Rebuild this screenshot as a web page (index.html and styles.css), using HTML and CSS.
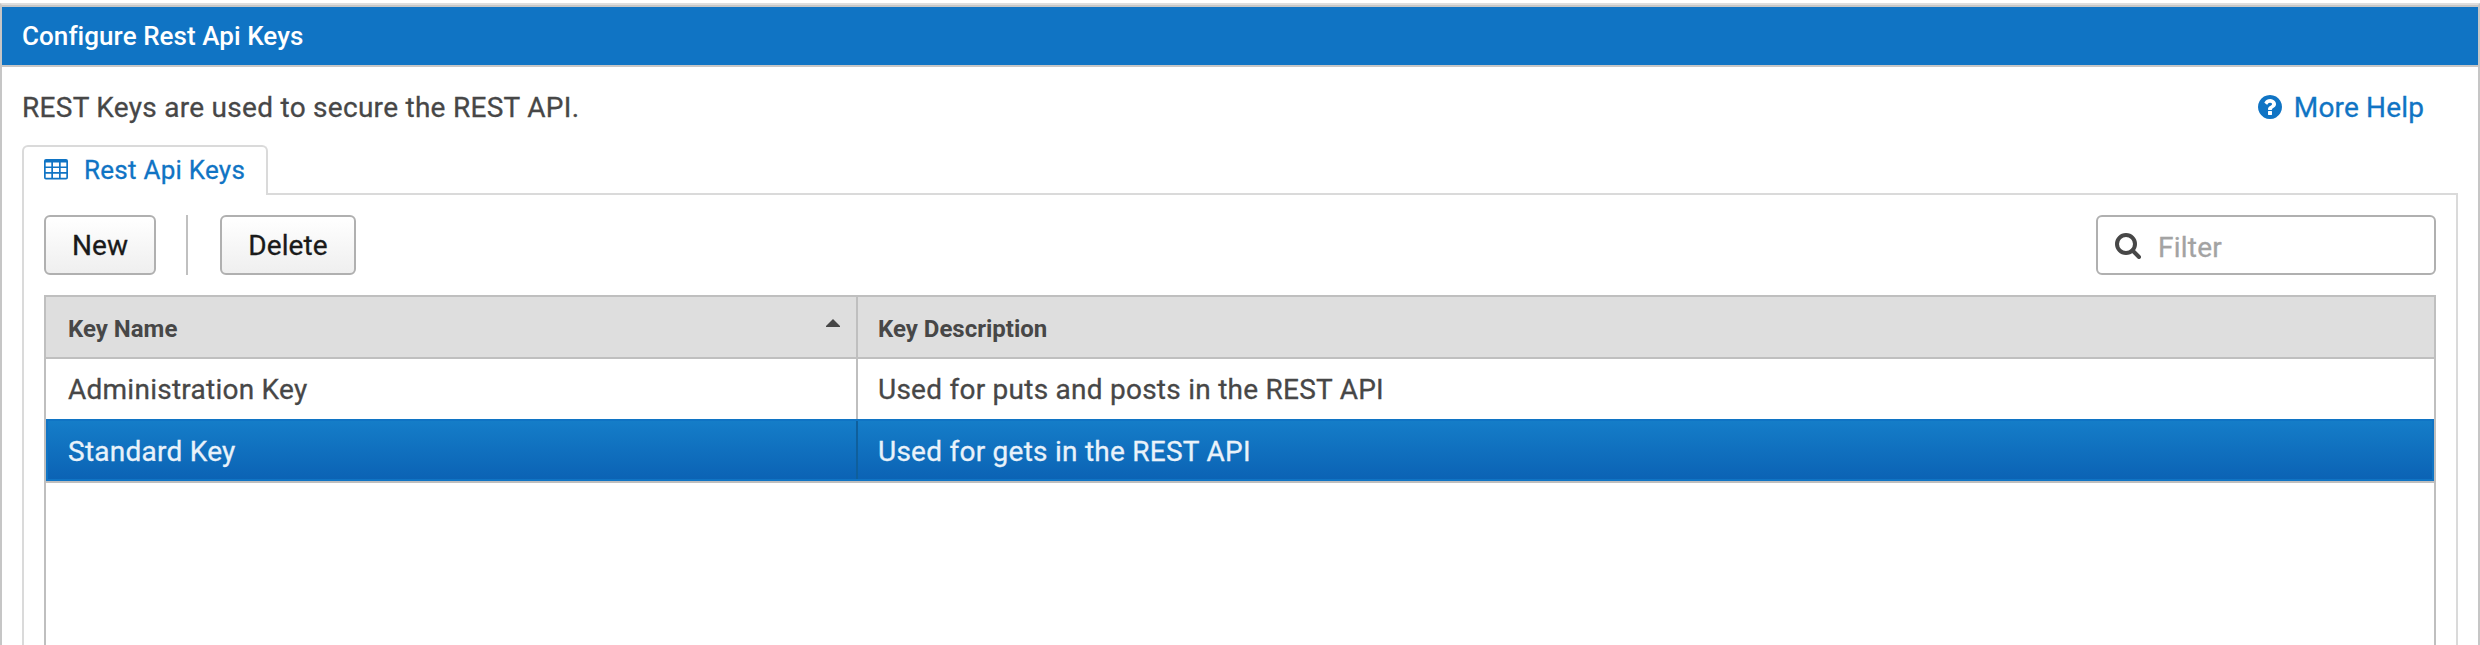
FILE: index.html
```html
<!DOCTYPE html>
<html lang="en">
<head>
<meta charset="utf-8">
<title>Configure Rest Api Keys</title>
<link rel="stylesheet" href="styles.css">
</head>
<body>
<main class="window">
  <h1 class="window-title">Configure Rest Api Keys</h1>
  <div class="intro">
    <p class="intro-text">REST Keys are used to secure the REST API.</p>
    <a class="help">
      <svg class="help-icon" viewBox="0 0 1536 1536" width="24" height="24"><path fill="currentColor" d="M896 1248v-192q0-14-9-23t-23-9H672q-14 0-23 9t-9 23v192q0 14 9 23t23 9h192q14 0 23-9t9-23zm256-672q0-88-55.500-163T958 297t-170-41q-243 0-371 213-15 24 8 42l132 100q7 6 19 6 16 0 25-12 53-68 86-92 34-24 86-24 48 0 85.500 26t37.500 59q0 38-20 61t-68 45q-63 28-115.500 86.500T640 892v36q0 14 9 23t23 9h192q14 0 23-9t9-23q0-19 21.500-49.500T972 829q32-18 49-28.500t46-35 44.500-48 28-60.500 12.500-81zm384 192q0 209-103 385.500T1153.500 1433 768 1536t-385.500-103T103 1153.500 0 768t103-385.500T382.500 103 768 0t385.500 103T1433 382.500 1536 768z"/></svg>
      <span class="help-text">More Help</span>
    </a>
  </div>
  <div class="tabs">
    <div class="tab">
      <svg class="tab-icon" viewBox="0 0 24 21" width="24" height="21"><path fill="currentColor" fill-rule="evenodd" d="M2 0H22Q24 0 24 2V18.500Q24 20.500 22 20.500H2Q0 20.500 0 18.500V2Q0 0 2 0ZM1.700 3.500V7.500H7.300V3.500ZM9 3.500V7.500H15V3.500ZM16.700 3.500V7.500H22.300V3.500ZM1.700 9V13H7.300V9ZM9 9V13H15V9ZM16.700 9V13H22.300V9ZM1.700 14.700V18.700H7.300V14.700ZM9 14.700V18.700H15V14.700ZM16.700 14.700V18.700H22.300V14.700Z"/></svg>
      <span>Rest Api Keys</span>
    </div>
    <div class="tab-rule"></div>
  </div>
  <section class="panel">
    <div class="toolbar">
      <button class="button button-new">New</button>
      <div class="separator"></div>
      <button class="button button-delete">Delete</button>
      <div class="filter">
        <svg class="search-icon" viewBox="0 0 26 26" width="26" height="26" fill="none" stroke="currentColor" stroke-width="4"><circle cx="11" cy="11" r="9"/><path stroke-linecap="round" d="M17.500 17.500L24 24"/></svg>
        <span class="filter-text">Filter</span>
      </div>
    </div>
    <div class="grid">
      <div class="row head">
        <div class="cell name"><span>Key Name</span><svg class="sort" viewBox="0 0 14 8" width="14" height="8"><path fill="currentColor" d="M7 0L14 7V8H0V7Z"/></svg></div>
        <div class="cell">Key Description</div>
      </div>
      <div class="row">
        <div class="cell name">Administration Key</div>
        <div class="cell">Used for puts and posts in the REST API</div>
      </div>
      <div class="row selected">
        <div class="cell name">Standard Key</div>
        <div class="cell">Used for gets in the REST API</div>
      </div>
    </div>
  </section>
</main>
</body>
</html>
```
FILE: styles.css
```css
* { box-sizing: border-box; }
body {
  margin: 0;
  height: 645px;
  overflow: hidden;
  background: #fff;
  font-family: Roboto, sans-serif;
  font-size: 28px;
  letter-spacing: 0.25px;
  -webkit-text-stroke: 0.3px;
  color: #474747;
}
.window {
  height: 642px;
  margin-top: 3px;
  display: flex;
  flex-direction: column;
  border: 2px solid #c6c6c6;
  border-top-color: #dedede;
  border-bottom: 0;
}
.window-title {
  margin: 0;
  flex: none;
  height: 62px;
  padding-left: 20px;
  border-top: 2px solid #c6c6c6;
  border-bottom: 2px solid #c6c6c6;
  background: #1074c4;
  color: #fff;
  font-size: 26px;
  font-weight: 500;
  letter-spacing: 0.06px;
  -webkit-text-stroke: 0;
  line-height: 58px;
}
.intro {
  flex: none;
  display: flex;
  justify-content: space-between;
  height: 78px;
  padding: 0 54px 0 20px;
  line-height: 82px;
}
.intro-text { margin: 0; letter-spacing: 0.28px; }
.help {
  display: flex;
  align-items: center;
  gap: 12px;
  height: 80px;
  color: #1074c4;
}
.help-text { padding-top: 2px; letter-spacing: 0.15px; }
.tabs { flex: none; display: flex; height: 50px; padding: 0 20px; }
.tab {
  display: flex;
  align-items: center;
  gap: 16px;
  width: 246px;
  padding: 0 0 3px 20px;
  border: 2px solid #dadada;
  border-bottom: 0;
  border-radius: 6px 6px 0 0;
  color: #1074c4;
  font-size: 26px;
}
.tab-rule { flex: 1; border-bottom: 2px solid #dadada; }
.panel {
  flex: 1;
  min-height: 0;
  display: flex;
  flex-direction: column;
  margin: 0 20px;
  padding: 20px 20px 0;
  border: solid #dadada;
  border-width: 0 2px;
}
.toolbar { flex: none; display: flex; height: 60px; margin-bottom: 20px; }
.button {
  padding: 0;
  border: 2px solid #b0b0b0;
  border-radius: 6px;
  background: linear-gradient(#fff, #efefef);
  color: #1a1a1a;
  font: inherit;
  letter-spacing: 0.1px;
}
.button-new { width: 112px; }
.button-delete { width: 136px; }
.separator { width: 2px; margin: 0 32px 0 30px; background: #c0c0c0; }
.filter {
  display: flex;
  align-items: center;
  width: 340px;
  margin-left: auto;
  padding-left: 17px;
  border: 2px solid #b0b0b0;
  border-radius: 6px;
  color: #a3a3a3;
}
.search-icon { color: #474747; margin: 2px 17px 0 0; }
.filter-text { padding-top: 4px; }
.grid { flex: 1; border: 2px solid #bfbfbf; border-bottom: 0; }
.row { display: flex; height: 60px; line-height: 62px; }
.cell { flex: 1; padding-left: 20px; white-space: nowrap; }
.name { flex: none; width: 812px; height: 60px; padding-left: 22px; border-right: 2px solid #bfbfbf; }
.head {
  height: 62px;
  border-bottom: 2px solid #bfbfbf;
  background: #dedede;
  font-size: 24px;
  font-weight: 700;
  letter-spacing: 0;
  -webkit-text-stroke: 0;
  line-height: 65px;
}
.head .name { display: flex; justify-content: space-between; padding-right: 16px; }
.sort { margin-top: 22px; }
.selected {
  height: 64px;
  border-bottom: 2px solid #bfbfbf;
  background: linear-gradient(#157ec9, #0b62b4);
  box-shadow: inset 0 0 0 2px #1074c4;
  color: #e9f2fa;
  line-height: 66px;
}
.selected .name { height: 58px; margin: 2px 0; line-height: 62px; border-color: #0f5f9c; }
```
